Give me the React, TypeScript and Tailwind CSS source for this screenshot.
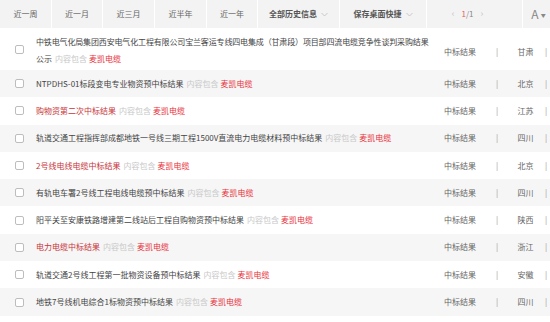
import React from 'react';

type Row = {
  title: string;
  rest?: string;
  red?: boolean;
  province: string;
};

const rows: Row[] = [
  {
    title: '中铁电气化局集团西安电气化工程有限公司宝兰客运专线四电集成（甘肃段）项目部四流电缆竞争性谈判采购结果',
    rest: '公示',
    province: '甘肃',
  },
  { title: 'NTPDHS-01标段变电专业物资预中标结果', province: '北京' },
  { title: '购物资第二次中标结果', red: true, province: '江苏' },
  { title: '轨道交通工程指挥部成都地铁一号线三期工程1500V直流电力电缆材料预中标结果', province: '四川' },
  { title: '2号线电线电缆中标结果', red: true, province: '北京' },
  { title: '有轨电车署2号线工程电线电缆预中标结果', province: '四川' },
  { title: '阳平关至安康铁路增建第二线站后工程自购物资预中标结果', province: '陕西' },
  { title: '电力电缆中标结果', red: true, province: '浙江' },
  { title: '轨道交通2号线工程第一批物资设备预中标结果', province: '安徽' },
  { title: '地铁7号线机电综合1标物资预中标结果', province: '四川' },
];

const Chevron = () => (
  <svg width="7" height="5" viewBox="0 0 7 5">
    <path d="M0.5 1 L3.5 4 L6.5 1" fill="none" stroke="#c4c4c4" strokeWidth="0.9" />
  </svg>
);

const Toolbar = () => {
  const simple = [
    { label: '近一周', w: 'w-[52px]' },
    { label: '近一月', w: 'w-[51px]' },
    { label: '近三月', w: 'w-[52px]' },
    { label: '近半年', w: 'w-[52px]' },
    { label: '近一年', w: 'w-[51px]' },
  ];
  return (
    <div className="flex h-[28px] bg-[#f3f3f3] text-[8px] text-[#666]">
      {simple.map((s) => (
        <div key={s.label} className={`${s.w} flex items-center justify-center border-r border-white`}>
          {s.label}
        </div>
      ))}
      <div className="w-[82px] flex items-center justify-center gap-[4px] border-r border-white font-bold text-[#555]">
        全部历史信息
        <Chevron />
      </div>
      <div className="w-[87px] flex items-center justify-center gap-[4px] border-r border-white font-bold text-[#555]">
        保存桌面快捷
        <Chevron />
      </div>
      <div className="w-[96px] flex items-center justify-center gap-[7px] border-r border-white pr-[14px] text-[#aaa]">
        <span className="text-[9px] text-[#c4c4c4]">‹</span>
        <span>
          <span className="text-[#e85a5a]">1</span>
          <span className="text-[#888]">/1</span>
        </span>
        <span className="text-[9px] text-[#c4c4c4]">›</span>
      </div>
      <div className="flex-1 flex items-center justify-center gap-[2px] pl-[4px] text-[#888]">
        <span className="text-[12px] leading-none">A</span>
        <span className="text-[5px] leading-none">▼</span>
      </div>
    </div>
  );
};

const Checkbox = () => (
  <div className="h-[9px] w-[9px] rounded-[2px] border border-[#bdbdbd] bg-white" />
);

const Match = () => (
  <>
    <span className="ml-[3px] mr-[2px] text-[#c8c8c8]">内容包含</span>
    <span className="text-[#e8323c]">麦凯电缆</span>
  </>
);

const ListRow = ({ row, index }: { row: Row; index: number }) => {
  const tall = !!row.rest;
  const nudge = tall ? 'pt-[5px]' : '';
  return (
    <div
      className={`flex items-center text-[8px] ${tall ? 'h-[42px]' : 'h-[27.3px]'} ${
        index % 2 === 1 ? 'bg-[#f6f6f6]' : 'bg-white'
      }`}
    >
      <div className="w-[36px] flex justify-center pl-[2px]">
        <Checkbox />
      </div>
      {tall ? (
        <div className="w-[399px] leading-[17px] pt-[1px]">
          <div className="tracking-[-0.15px] text-[#444] whitespace-nowrap">{row.title}</div>
          <div>
            <span className="text-[#444]">{row.rest}</span>
            <Match />
          </div>
        </div>
      ) : (
        <div className="w-[399px] leading-[12px]">
          <span className={row.red ? 'text-[#c8353a]' : 'text-[#444]'}>{row.title}</span>
          <Match />
        </div>
      )}
      <div className={`w-[50px] text-center text-[#666] ${nudge}`}>中标结果</div>
      <div className={`w-[24px] text-center text-[#999] ${nudge}`}>|</div>
      <div className={`w-[33px] text-center text-[#666] ${nudge}`}>{row.province}</div>
      <div className={`flex-1 text-center text-[#999] ${nudge}`}>|</div>
    </div>
  );
};

export default function App() {
  return (
    <div
      className="w-[550px] h-[322px] overflow-hidden bg-white"
      style={{ fontFamily: '"Noto Sans CJK SC", "Noto Sans", sans-serif' }}
    >
      <Toolbar />
      {rows.map((r, i) => (
        <ListRow key={i} row={r} index={i} />
      ))}
    </div>
  );
}
